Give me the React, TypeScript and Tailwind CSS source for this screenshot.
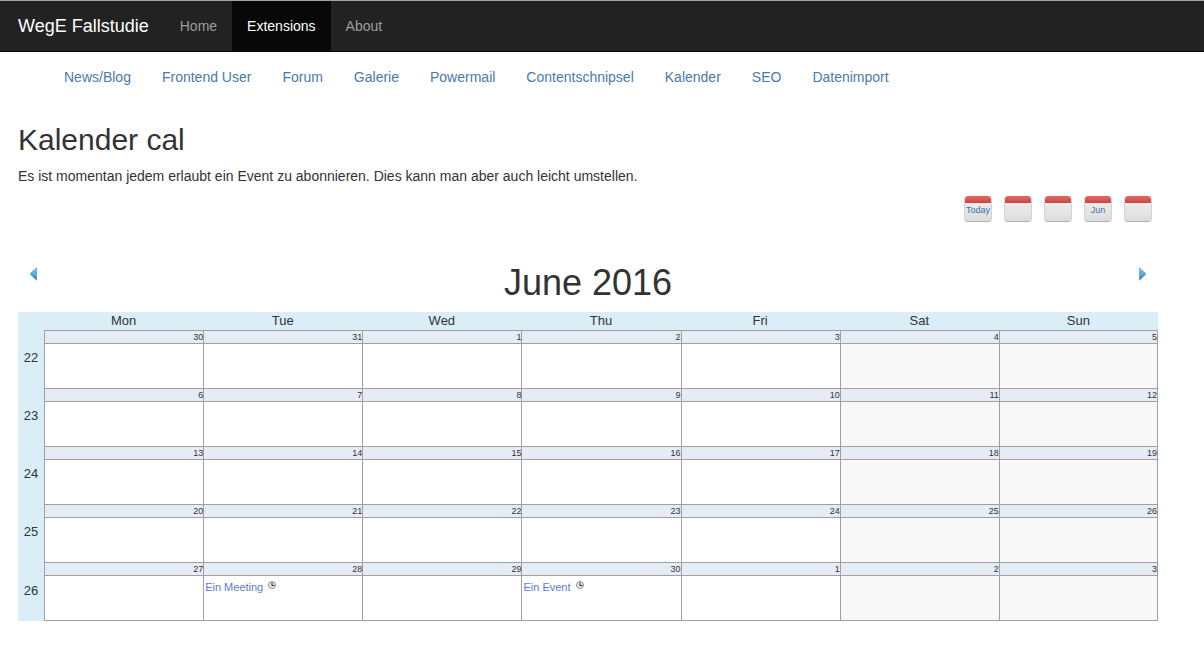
import React from "react";

const subLinks = [
  "News/Blog",
  "Frontend User",
  "Forum",
  "Galerie",
  "Powermail",
  "Contentschnipsel",
  "Kalender",
  "SEO",
  "Datenimport",
];

const viewButtons = [
  { name: "Today", text: "Today" },
  { name: "Day view", text: "" },
  { name: "Week view", text: "" },
  { name: "Month view", text: "Jun" },
  { name: "Year view", text: "" },
];

const weekdays = ["Mon", "Tue", "Wed", "Thu", "Fri", "Sat", "Sun"];

const weeks = [
  { week: 22, days: [30, 31, 1, 2, 3, 4, 5] },
  { week: 23, days: [6, 7, 8, 9, 10, 11, 12] },
  { week: 24, days: [13, 14, 15, 16, 17, 18, 19] },
  { week: 25, days: [20, 21, 22, 23, 24, 25, 26] },
  { week: 26, days: [27, 28, 29, 30, 1, 2, 3] },
];

const events: Record<string, string> = {
  "26-1": "Ein Meeting",
  "26-3": "Ein Event",
};

function Clock() {
  return (
    <svg className="mb-1 size-2" viewBox="0 0 8 8" aria-hidden="true">
      <circle cx="4" cy="4" r="3.5" fill="#ececec" stroke="#8d8d8d" strokeWidth="1" />
      <path d="M4 1.5V4.5H6.4" fill="none" stroke="#333" strokeWidth="1.1" />
    </svg>
  );
}

function Arrow({ direction }: { direction: "left" | "right" }) {
  const left = direction === "left";
  const id = "arrow-" + direction;
  return (
    <svg className="h-[14px] w-2" viewBox="0 0 8 14" aria-hidden="true">
      <defs>
        <linearGradient id={id} x1="0" y1="0" x2="0" y2="1">
          <stop offset="0" stopColor="#8cc8ec" />
          <stop offset="0.5" stopColor="#5fabdd" />
          <stop offset="1" stopColor="#1f78bd" />
        </linearGradient>
      </defs>
      <path
        d={left ? "M7.5 0.8V13.2L1 7Z" : "M0.5 0.8V13.2L7 7Z"}
        fill={"url(#" + id + ")"}
        stroke="#3d8fca"
        strokeWidth="0.6"
      />
    </svg>
  );
}

function DateButton({ name, text }: { name: string; text: string }) {
  return (
    <button
      type="button"
      aria-label={name}
      className="flex h-[26px] w-7 flex-col overflow-hidden rounded-[4px] border-x border-b border-x-[#d4d4d4] border-b-[#b0b0b0] bg-linear-to-b from-[#f4f4f4] to-[#dcdcde] text-[9px] leading-3 text-[#3f70ab]"
    >
      <span className="h-[7px] w-full shrink-0 bg-linear-to-b from-[#e46a66] to-[#c94643]" />
      <span className="mt-px flex w-full justify-center">{text}</span>
    </button>
  );
}

export default function App() {
  return (
    <div className="bg-white pb-8 font-['Liberation_Sans',Arial,sans-serif] text-sm leading-5 text-[#333]">
      <nav className="flex h-[52px] items-stretch border-t border-b border-t-[#a3a8a6] border-b-[#080808] bg-[#222] pl-[18px]">
        <a href="#start" className="flex items-center pr-4 text-lg text-white">
          WegE Fallstudie
        </a>
        <a href="#home" className="flex items-center px-[15px] text-[#9d9d9d]">
          Home
        </a>
        <a href="#extensions" aria-current="page" className="flex items-center bg-[#080808] px-[15px] text-white">
          Extensions
        </a>
        <a href="#about" className="flex items-center px-[15px] text-[#9d9d9d]">
          About
        </a>
      </nav>

      <nav className="flex gap-[31px] pt-[15px] pl-16 text-[#4a7aab]">
        {subLinks.map((label) => (
          <a key={label} href={"#" + label}>
            {label}
          </a>
        ))}
      </nav>

      <main className="pr-[46px] pl-[18px]">
        <h1 className="mt-9 text-3xl leading-[33px]">Kalender cal</h1>
        <p className="mt-[10px]">
          Es ist momentan jedem erlaubt ein Event zu abonnieren. Dies kann man aber auch leicht umstellen.
        </p>

        <div className="mt-[10px] flex justify-end gap-3 pr-[6px]">
          {viewButtons.map((button) => (
            <DateButton key={button.name} {...button} />
          ))}
        </div>

        <div className="mt-[41px] flex items-start justify-between pr-[11px] pl-[11px]">
          <button type="button" aria-label="Previous month" className="mt-1">
            <Arrow direction="left" />
          </button>
          <h2 className="text-4xl leading-10">June 2016</h2>
          <button type="button" aria-label="Next month" className="mt-1">
            <Arrow direction="right" />
          </button>
        </div>

        <table className="mt-[9px] w-full table-fixed border-separate border-spacing-0">
          <colgroup>
            <col className="w-[26px]" />
            {weekdays.map((day) => (
              <col key={day} />
            ))}
          </colgroup>
          <thead>
            <tr className="h-[18px] bg-[#d9eef7] text-[13px] leading-[18px]">
              <td className="p-0" />
              {weekdays.map((day) => (
                <th key={day} scope="col" className="p-0 font-normal">
                  {day}
                </th>
              ))}
            </tr>
          </thead>
          <tbody>
            {weeks.map(({ week, days }) => (
              <tr key={week} className="group">
                <th scope="row" className="bg-[#d9eef7] p-0 pb-0.5 text-[13px] font-normal">
                  {week}
                </th>
                {days.map((day, i) => {
                  const event = events[week + "-" + i];
                  return (
                    <td
                      key={i}
                      className={
                        "border-t border-l border-[#a0a0a4] p-0 align-top last:border-r group-last:border-b " +
                        (i > 4 ? "bg-[#f8f8f8]" : "bg-white")
                      }
                    >
                      <div className="h-[13px] border-b border-[#a0a0a4] bg-[#e6ecf6] text-right text-[9px] leading-3">
                        {day}
                      </div>
                      <div className="h-11 px-px pt-[3px] text-[11px] leading-4">
                        {event && (
                          <a href={"#" + event} className="flex items-center gap-[5px] text-[#5b7bd0]">
                            {event}
                            <Clock />
                          </a>
                        )}
                      </div>
                    </td>
                  );
                })}
              </tr>
            ))}
          </tbody>
        </table>
      </main>
    </div>
  );
}
